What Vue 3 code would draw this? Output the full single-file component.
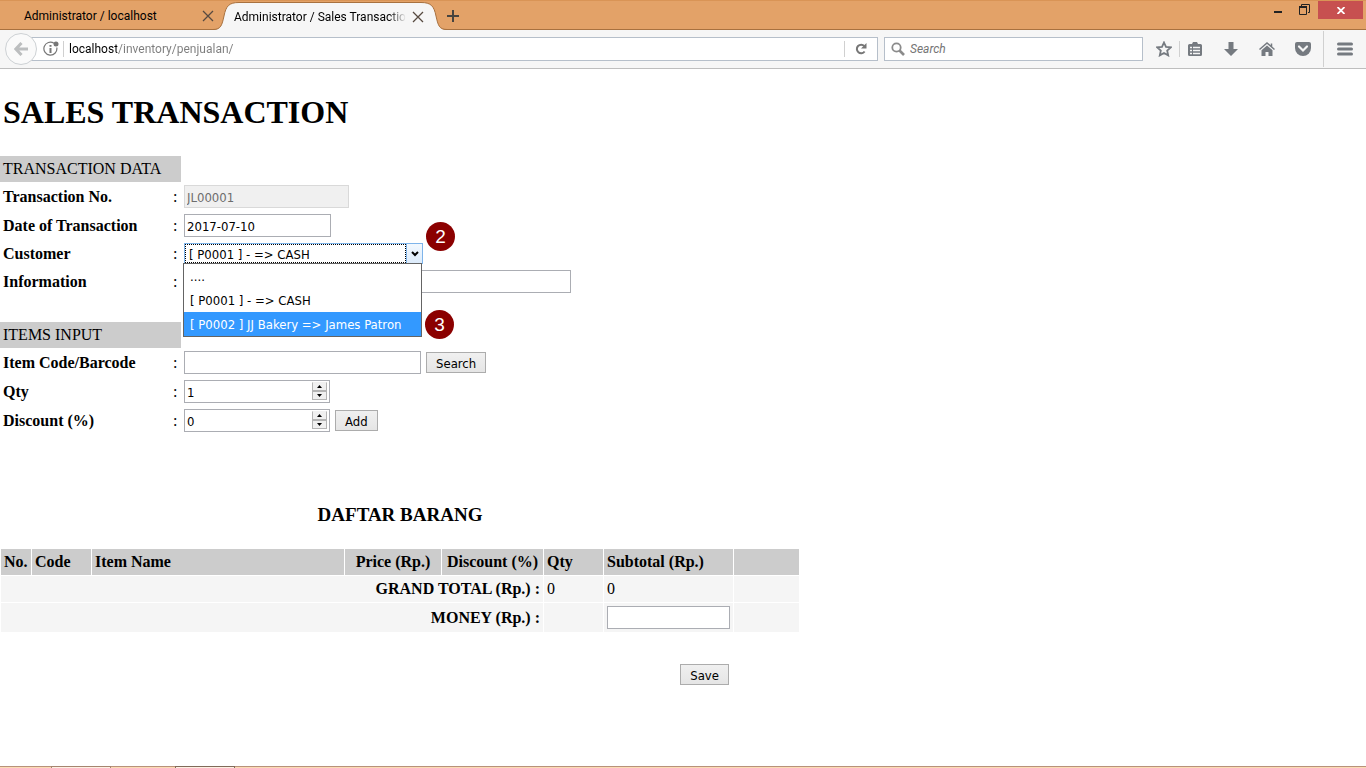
<script setup>
import { ref } from 'vue'

const address = ref('localhost/inventory/penjualan/')
const search = ref('')
const transactionNo = ref('JL00001')
const date = ref('2017-07-10')
const customer = ref('P0001')
const information = ref('')
const itemCode = ref('')
const qty = ref(1)
const discount = ref(0)
const money = ref('')

const customers = [
  { value: '', label: '....' },
  { value: 'P0001', label: '[ P0001 ] - => CASH' },
  { value: 'P0002', label: '[ P0002 ] JJ Bakery => James Patron' },
]
const highlighted = ref('P0002')
</script>

<template>
  <div class="window">
    <header class="tabbar">
      <div class="tab">
        <span class="tab-title">Administrator / localhost</span>
        <button class="plain close" aria-label="Close tab">
          <svg width="12" height="12" viewBox="0 0 12 12"><path d="M1 1l10 10M11 1L1 11" /></svg>
        </button>
      </div>
      <div class="tab active">
        <svg class="curve" width="26" height="28" viewBox="0 0 26 28">
          <path class="fill" d="M0 28C8 28 9 23 11 14C13 4 16 .5 26 .5V28Z" />
          <path class="edge" d="M0 27.5C8 27.5 9 23 11 14C13 4 16 .5 26 .5" />
        </svg>
        <div class="tab-body">
          <span class="tab-title fade">Administrator / Sales Transaction</span>
          <button class="plain close" aria-label="Close tab">
            <svg width="12" height="12" viewBox="0 0 12 12"><path d="M1 1l10 10M11 1L1 11" /></svg>
          </button>
        </div>
        <svg class="curve" width="26" height="28" viewBox="0 0 26 28">
          <path class="fill" d="M26 28C18 28 17 23 15 14C13 4 10 .5 0 .5V28Z" />
          <path class="edge" d="M26 27.5C18 27.5 17 23 15 14C13 4 10 .5 0 .5" />
        </svg>
      </div>
      <button class="plain newtab" aria-label="New tab">
        <svg width="12" height="12" viewBox="0 0 12 12"><path d="M6 0v12M0 6h12" /></svg>
      </button>
      <div class="controls">
        <button class="plain ctl" aria-label="Minimize">
          <svg width="10" height="12" viewBox="0 0 10 12"><path d="M1 8h8v2H1z" fill="#222" /></svg>
        </button>
        <button class="plain ctl" aria-label="Restore">
          <svg width="11" height="11" viewBox="0 0 11 11" fill="none" stroke="#222"><path d="M2.500 2V.5h8v8H9" /><path d="M.5 3.500h7v7h-7z" /><path d="M0 3h8" stroke-width="2" /></svg>
        </button>
        <button class="plain ctl-close" aria-label="Close">
          <svg width="8" height="7" viewBox="0 0 8 7"><path d="M.5 0l7 7M7.500 0l-7 7" stroke="#fff" stroke-width="1.800" /></svg>
        </button>
      </div>
    </header>

    <nav class="toolbar">
      <button class="plain back" aria-label="Back">
        <svg width="14" height="14" viewBox="0 0 14 14" fill="none" stroke="#bcbebf" stroke-width="3"><path d="M7.500 1L1.800 7l5.700 6M2 7h12" /></svg>
      </button>
      <div class="urlbox">
        <svg class="info" width="17" height="17" viewBox="0 0 17 17">
          <path d="M11 2.200A6.500 6.500 0 1 0 13.800 6.500" fill="none" stroke="#777" stroke-width="1.200" />
          <circle cx="13" cy="3" r="2.500" fill="#777" />
          <path d="M6.500 4h2v1.800h-2zM6.500 7h2v5h-2z" fill="#777" />
        </svg>
        <span class="sep"></span>
        <input v-model="address" class="address" type="text" aria-label="Address" />
        <span class="sep"></span>
        <button class="plain reload" aria-label="Reload">
          <svg width="12" height="12" viewBox="0 0 12 12"><path d="M9.300 3A4.300 4.300 0 1 0 9.600 8.500" fill="none" stroke="#777" stroke-width="2" /><path d="M11.500 0v5.500H6z" fill="#777" /></svg>
        </button>
      </div>
      <div class="searchbox">
        <svg width="14" height="14" viewBox="0 0 14 14" fill="none" stroke="#8b8b8b"><circle cx="5.500" cy="5.500" r="4.200" stroke-width="1.800" /><path d="M8.500 8.500L13 13" stroke-width="2.600" /></svg>
        <input v-model="search" type="search" placeholder="Search" aria-label="Search the web" />
      </div>
      <div class="tools">
        <button class="plain" aria-label="Bookmark">
          <svg width="16" height="16" viewBox="0 0 16 16"><path d="M8 1.500l2 4.400 4.800.5-3.600 3.200 1 4.800L8 12l-4.200 2.400 1-4.800L1.200 6.400 6 5.900z" fill="none" stroke="#757a80" stroke-width="1.800" /></svg>
        </button>
        <span class="sep"></span>
        <button class="plain" aria-label="Bookmarks list">
          <svg width="14" height="16" viewBox="0 0 14 16"><path d="M1.500 3H4L5 1h4l1 2h2.500Q14 3 14 4.500v9Q14 15 12.500 15h-11Q0 15 0 13.500v-9Q0 3 1.500 3z" fill="#757a80" /><path d="M2 6.500h2M5 6.500h7M2 9.500h2M5 9.500h7M2 12.500h2M5 12.500h7" stroke="#f5f5f5" stroke-width="1.400" /></svg>
        </button>
        <button class="plain" aria-label="Downloads">
          <svg width="14" height="14" viewBox="0 0 14 14"><path d="M4.500 0h5v7H14l-7 7-7-7h4.500z" fill="#757a80" /></svg>
        </button>
        <button class="plain" aria-label="Home">
          <svg width="16" height="14" viewBox="0 0 16 14"><path d="M.5 7.500L8 1l7.500 6.500M12.500 1.500v3" fill="none" stroke="#757a80" stroke-width="1.500" /><path d="M8 3.500l5.500 4.700V14H9.500v-4h-3v4h-4V8.200z" fill="#757a80" /></svg>
        </button>
        <button class="plain" aria-label="Pocket">
          <svg width="16" height="14" viewBox="0 0 16 14"><path d="M2 0h12q2 0 2 2v4a8 8 0 0 1-16 0V2q0-2 2-2z" fill="#757a80" /><path d="M4 4.500l4 4 4-4" fill="none" stroke="#f5f5f5" stroke-width="2.200" stroke-linecap="round" /></svg>
        </button>
        <span class="sep tall"></span>
        <button class="plain menu" aria-label="Menu">
          <svg width="16" height="14" viewBox="0 0 16 14"><path d="M1.500 2h13M1.500 7h13M1.500 12h13" stroke="#757a80" stroke-width="3" stroke-linecap="round" /></svg>
        </button>
      </div>
    </nav>

    <main class="page">
      <h1>SALES TRANSACTION</h1>
      <form class="entry" @submit.prevent>
        <h2 class="section">TRANSACTION DATA</h2>
        <div class="row">
          <label for="no">Transaction No.</label><span>:</span>
          <input id="no" v-model="transactionNo" class="w-no" type="text" disabled />
        </div>
        <div class="row">
          <label for="date">Date of Transaction</label><span>:</span>
          <input id="date" v-model="date" class="w-short" type="text" />
        </div>
        <div class="row">
          <label for="customer">Customer</label><span>:</span>
          <div class="combo">
            <select id="customer" v-model="customer">
              <option v-for="c in customers" :key="c.value" :value="c.value">{{ c.label }}</option>
            </select>
            <span class="arrow">
              <svg width="8" height="6" viewBox="0 0 8 6"><path d="M1 1l3 3 3-3" fill="none" stroke="#000" stroke-width="2" /></svg>
            </span>
            <ul class="options">
              <li v-for="c in customers" :key="c.value" :class="{ on: c.value === highlighted }">{{ c.label }}</li>
            </ul>
            <span class="badge two">2</span>
            <span class="badge three">3</span>
          </div>
        </div>
        <div class="row">
          <label for="info">Information</label><span>:</span>
          <input id="info" v-model="information" class="w-info" type="text" />
        </div>
        <h2 class="section second">ITEMS INPUT</h2>
        <div class="row">
          <label for="code">Item Code/Barcode</label><span>:</span>
          <input id="code" v-model="itemCode" class="w-code" type="text" />
          <button class="btn" type="button">Search</button>
        </div>
        <div class="row">
          <label for="qty">Qty</label><span>:</span>
          <div class="number">
            <input id="qty" v-model="qty" type="number" />
            <div class="spin">
              <button type="button" aria-label="Increase quantity" @click="qty++"><svg width="5" height="3" viewBox="0 0 5 3"><path d="M0 3l2.500-3L5 3z" /></svg></button>
              <button type="button" aria-label="Decrease quantity" @click="qty--"><svg width="5" height="3" viewBox="0 0 5 3"><path d="M0 0l2.500 3L5 0z" /></svg></button>
            </div>
          </div>
        </div>
        <div class="row">
          <label for="disc">Discount (%)</label><span>:</span>
          <div class="number">
            <input id="disc" v-model="discount" type="number" />
            <div class="spin">
              <button type="button" aria-label="Increase discount" @click="discount++"><svg width="5" height="3" viewBox="0 0 5 3"><path d="M0 3l2.500-3L5 3z" /></svg></button>
              <button type="button" aria-label="Decrease discount" @click="discount--"><svg width="5" height="3" viewBox="0 0 5 3"><path d="M0 0l2.500 3L5 0z" /></svg></button>
            </div>
          </div>
          <button class="btn" type="button">Add</button>
        </div>
      </form>

      <section class="list">
        <h3>DAFTAR BARANG</h3>
        <table>
          <colgroup>
            <col class="c-no" /><col class="c-code" /><col /><col class="c-price" />
            <col class="c-disc" /><col class="c-qty" /><col class="c-sub" /><col class="c-act" />
          </colgroup>
          <thead>
            <tr>
              <th>No.</th><th>Code</th><th>Item Name</th><th class="mid">Price (Rp.)</th>
              <th class="mid">Discount (%)</th><th>Qty</th><th>Subtotal (Rp.)</th><th></th>
            </tr>
          </thead>
          <tbody>
            <tr>
              <th class="total" colspan="5">GRAND TOTAL (Rp.) :</th><td>0</td><td>0</td><td></td>
            </tr>
            <tr>
              <th class="total" colspan="5"><label for="money">MONEY (Rp.) :</label></th>
              <td></td><td><input id="money" v-model="money" type="text" /></td><td></td>
            </tr>
          </tbody>
        </table>
        <div class="actions"><button class="btn" type="button">Save</button></div>
      </section>
    </main>

    <footer class="taskbar"><span></span><span></span></footer>
  </div>
</template>

<style>
body {
  background: #fff;
}
</style>

<style scoped>
* {
  box-sizing: border-box;
}
.window {
  display: flex;
  flex-direction: column;
  min-height: 100vh;
  color: #000;
  font-family: "Liberation Serif", serif;
  font-size: 16px;
  line-height: 20px;
}
svg {
  display: block;
  flex: none;
}
button,
input,
select {
  margin: 0;
  color: inherit;
  font-family: "DejaVu Sans Condensed", "Noto Sans", sans-serif;
  font-size: 13px;
}
.plain {
  display: flex;
  align-items: center;
  justify-content: center;
  padding: 0;
  border: 0;
  background: none;
}

.tabbar {
  display: flex;
  height: 30px;
  background: #e3a268;
  border-top: 1px solid #d99456;
  box-shadow: inset 0 -1px #a8713f;
  font-family: Roboto, "Noto Sans", sans-serif;
  font-size: 12px;
}
.tab {
  display: flex;
  align-items: center;
  width: 213px;
  padding-left: 24px;
}
.tab-title {
  flex: 1;
  overflow: hidden;
  white-space: nowrap;
}
.fade {
  mask-image: linear-gradient(to right, #000 90%, transparent);
}
.close {
  flex: none;
  width: 20px;
  height: 20px;
}
.close path {
  stroke: #574a40;
  stroke-width: 1.3;
}
.tab:not(.active) .close {
  margin-right: -5px;
}
.tab.active {
  width: 234px;
  padding: 1px 0 0;
}
.tab-body {
  display: flex;
  flex: 1;
  align-items: center;
  min-width: 0;
  height: 28px;
  background: #f6f6f6;
  border-top: 1px solid #a8713f;
}
.tab-body .tab-title {
  margin: 0 2px 0 -5px;
}
.tab-body .close {
  margin-right: -7px;
  z-index: 1;
}
.curve .fill {
  fill: #f6f6f6;
}
.curve .edge {
  fill: none;
  stroke: #a8713f;
}
.newtab {
  width: 12px;
}
.newtab path {
  stroke: #48443f;
  stroke-width: 2;
}
.controls {
  display: flex;
  margin-left: auto;
  margin-right: 3px;
}
.ctl {
  width: 27px;
  height: 16px;
}
.ctl-close {
  width: 45px;
  height: 18px;
  background: #c75050;
}

.toolbar {
  display: flex;
  align-items: center;
  height: 39px;
  padding-left: 5px;
  background: #f6f6f6;
  border-bottom: 1px solid #bebebe;
}
.back {
  z-index: 1;
  width: 32px;
  height: 32px;
  margin-right: -6px;
  background: #fafafa;
  border: 1px solid #cdd1d4;
  border-radius: 50%;
}
.urlbox,
.searchbox {
  display: flex;
  align-items: center;
  height: 24px;
  background: #fff;
  border: 1px solid #b6bfca;
}
.urlbox {
  flex: 1;
  min-width: 0;
  padding-left: 11px;
}
.info {
  margin-right: 3px;
}
.sep {
  flex: none;
  width: 1px;
  height: 16px;
  background: #d0d0d0;
}
.address,
.searchbox input {
  flex: 1;
  min-width: 0;
  padding: 0 5px;
  border: 0;
  outline: 0;
  font-family: Roboto, "Noto Sans", sans-serif;
  font-size: 12px;
}
.address {
  background: linear-gradient(to right, #000 53px, #7c7c7c 53px);
  background-clip: text;
  -webkit-background-clip: text;
  color: transparent;
}
.reload {
  width: 32px;
  height: 22px;
}
.searchbox {
  width: 259px;
  margin: 0 6px;
  padding-left: 6px;
}
.searchbox input {
  background: none;
}
.searchbox input::placeholder {
  color: #757575;
  font-style: italic;
}
.tools {
  display: flex;
  align-items: center;
}
.tools .plain {
  width: 30px;
  height: 30px;
}
.tools .plain + .plain {
  margin-left: 6px;
}
.sep.tall {
  height: 36px;
  margin-left: 5px;
}
.tools .menu {
  width: 42px;
}

.page {
  flex: 1;
}
h1 {
  margin: 0;
  padding: 23px 3px 24px;
  font-size: 32px;
  line-height: 40px;
}
.section {
  width: 181px;
  margin: 0;
  padding: 3px;
  background: #ccc;
  font-size: 16px;
  font-weight: 400;
}
.second {
  margin-top: 26px;
}
.row {
  display: flex;
  align-items: center;
  padding: 3px;
}
.row > label {
  width: 170px;
  font-weight: 700;
}
.row > span {
  width: 11px;
}
input {
  height: 23px;
}
.row input,
td input {
  padding: 2px 2px 0;
  border: 1px solid #abadb3;
  background: #fff;
}
.row input:disabled {
  background: #f0f0f0;
  border-color: #d9d9d9;
  color: #6d6d6d;
}
.row .w-no {
  width: 165px;
}
.row .w-short {
  width: 147px;
}
.row .w-info {
  width: 387px;
}
.row .w-code {
  width: 237px;
}
.btn {
  height: 21px;
  padding: 1px 9px 0;
  background: linear-gradient(#f0f0f0, #e5e5e5);
  border: 1px solid #acacac;
}
.row .btn {
  margin-left: 5px;
}
.combo {
  position: relative;
  display: flex;
  width: 239px;
  height: 21px;
  border: 1px solid #7eb4ea;
}
.combo select {
  flex: 1;
  min-width: 0;
  padding: 2px 3px 0;
  appearance: none;
  background: #fff;
  border: 1px dotted #000;
  border-radius: 0;
  outline: 0;
}
.arrow {
  display: flex;
  align-items: center;
  justify-content: center;
  width: 16px;
  background: linear-gradient(#f2f8fe, #dcebfb);
  border-left: 1px solid #7eb4ea;
  pointer-events: none;
}
.options {
  position: absolute;
  z-index: 2;
  top: 19px;
  left: -2px;
  width: 239px;
  margin: 0;
  padding: 0;
  background: #fff;
  border: 1px solid #646464;
  font-family: "DejaVu Sans Condensed", "Noto Sans", sans-serif;
  font-size: 13px;
  line-height: 22px;
  list-style: none;
}
.options li {
  padding: 2px 0 0 6px;
}
.options .on {
  background: #39f;
  color: #fff;
}
.badge {
  position: absolute;
  z-index: 3;
  width: 29px;
  height: 29px;
  background: #8b0000;
  border-radius: 50%;
  color: #fff;
  font-family: "Liberation Sans", sans-serif;
  font-size: 19px;
  line-height: 29px;
  text-align: center;
}
.two {
  top: -22px;
  left: 241px;
}
.three {
  top: 66px;
  left: 240px;
}
.number {
  position: relative;
  width: 146px;
}
.number input {
  display: block;
  width: 100%;
  appearance: textfield;
}
.number input::-webkit-inner-spin-button {
  display: none;
}
.spin {
  position: absolute;
  top: 2px;
  right: 3px;
  width: 15px;
}
.spin button {
  display: flex;
  align-items: center;
  justify-content: center;
  width: 100%;
  height: 9px;
  padding: 0;
  background: #f0f0f0;
  border: 1px solid #b4b4b4;
}
.spin button:first-child {
  border-top-color: #f0f0f0;
}

.list {
  width: 800px;
  max-width: 100%;
  margin-top: 70px;
}
h3 {
  margin: 0 0 23px;
  font-size: 19px;
  text-align: center;
}
table {
  width: 100%;
  border-spacing: 1px;
  table-layout: fixed;
}
.c-no {
  width: 30px;
}
.c-code,
.c-qty {
  width: 59px;
}
.c-price {
  width: 96px;
}
.c-disc {
  width: 101px;
}
.c-sub {
  width: 129px;
}
.c-act {
  width: 65px;
}
th,
td {
  padding: 3px;
  text-align: left;
  white-space: nowrap;
}
thead th {
  background: #ccc;
}
tbody th,
tbody td {
  background: #f5f5f5;
}
th.mid {
  text-align: center;
}
th.total {
  text-align: right;
}
td input {
  display: block;
  width: 100%;
}
.actions {
  display: flex;
  justify-content: flex-end;
  padding: 31px 71px 0 0;
}

.taskbar {
  display: flex;
  gap: 64px;
  height: 2px;
  padding-left: 51px;
  background: #fbdcb4;
  border-top: 1px solid #b8917a;
}
.taskbar span {
  width: 60px;
  height: 2px;
  margin-top: -1px;
  background: #fdf0e2;
  border: 1px solid #806a5a;
  border-bottom: 0;
}
.taskbar span:first-child {
  border-color: #a5846f;
}
</style>
